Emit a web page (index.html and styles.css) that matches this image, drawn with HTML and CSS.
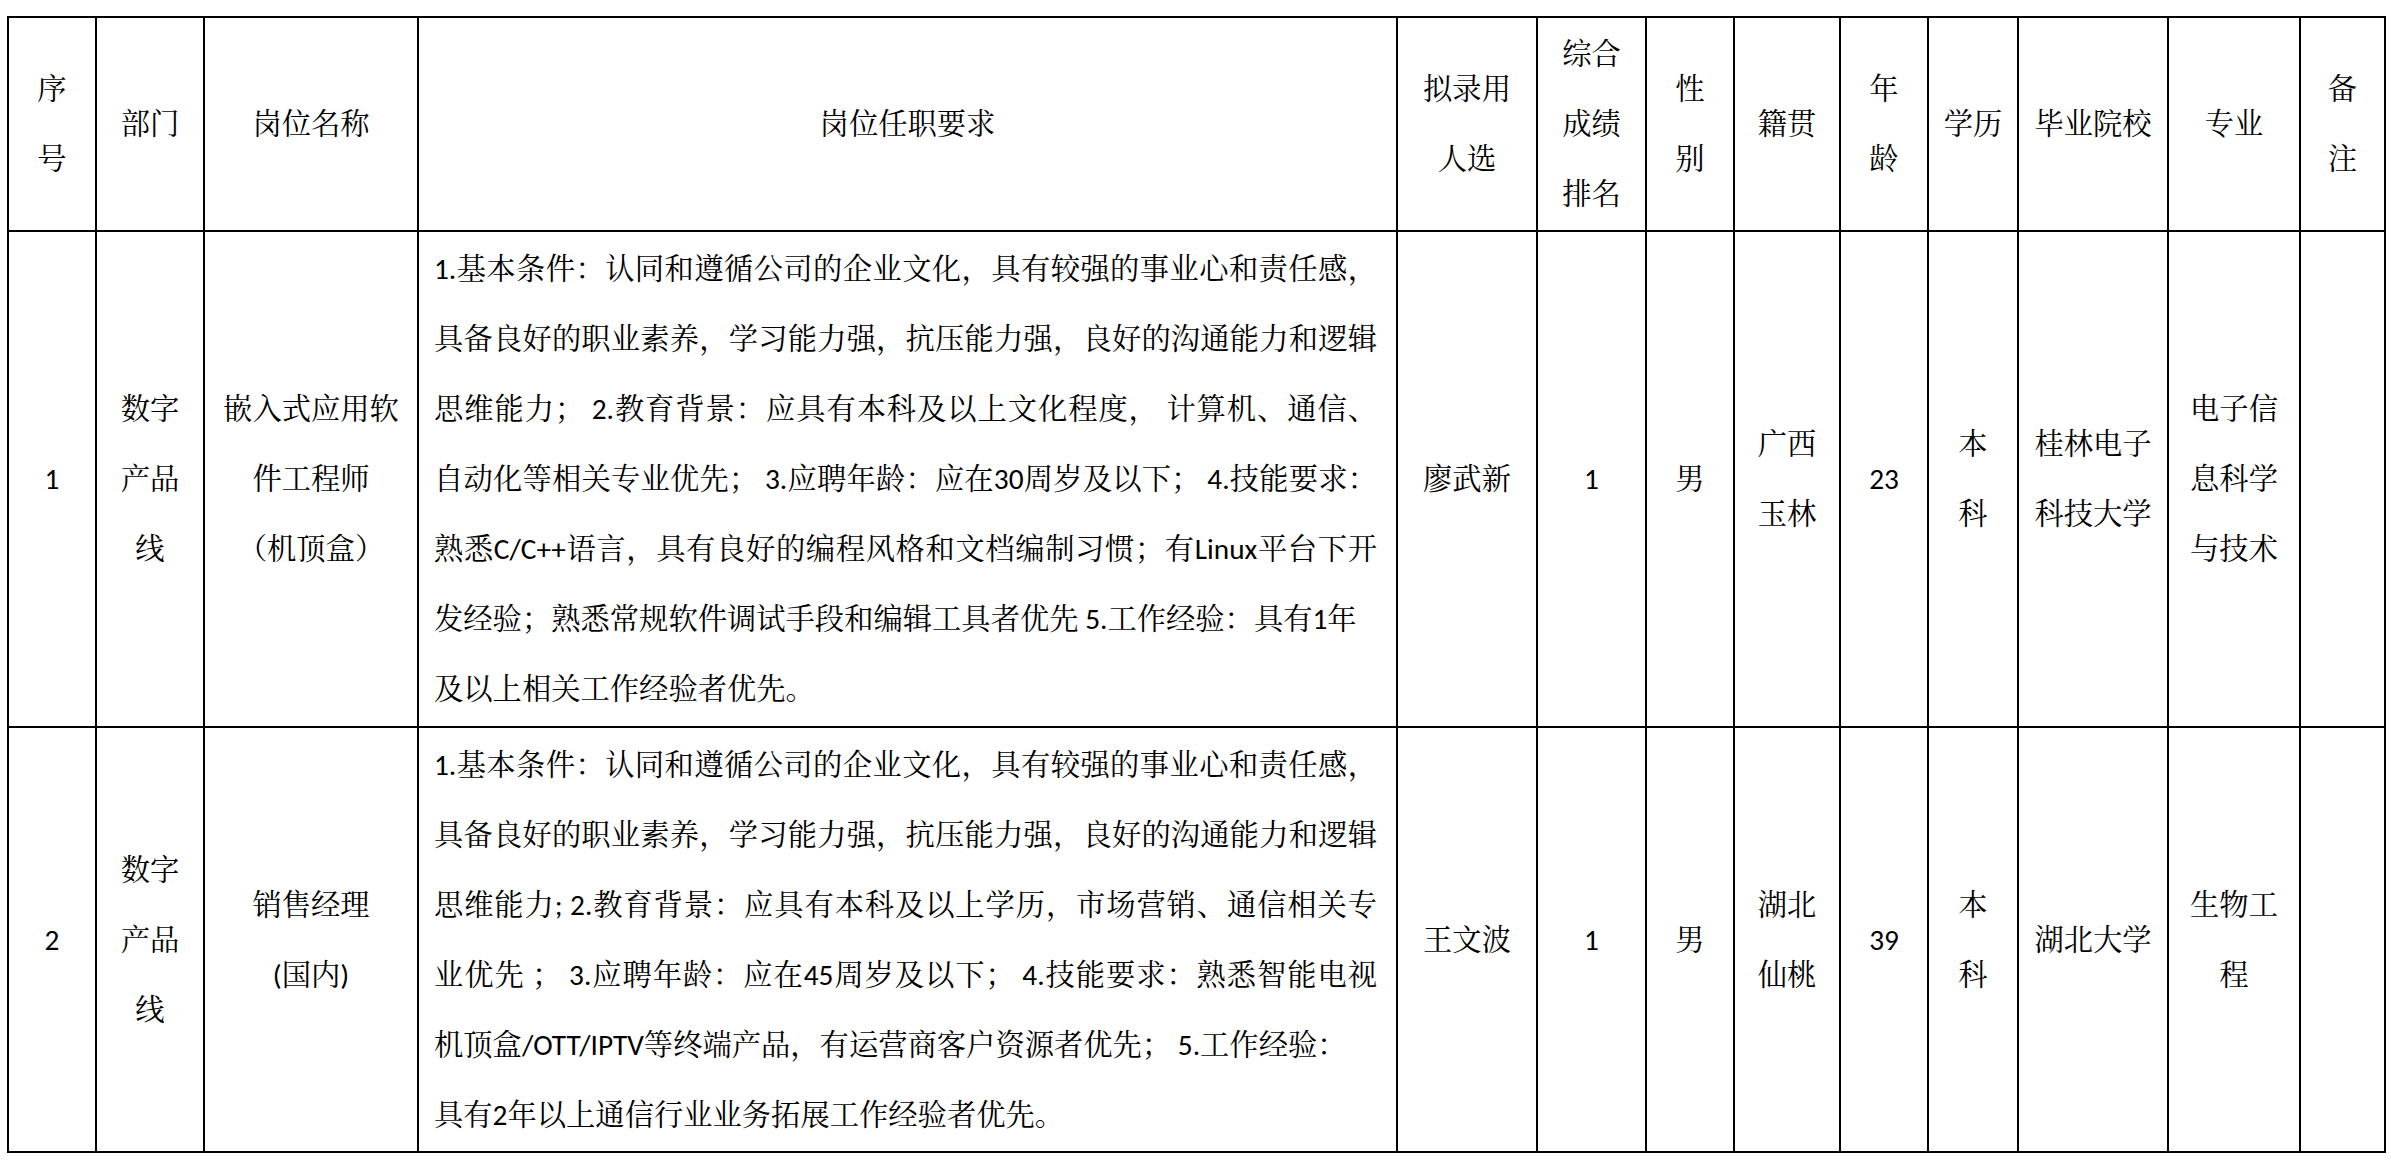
FILE: index.html
```html
<!DOCTYPE html>
<html lang="zh-CN">
<head>
<meta charset="utf-8">
<title>拟录用人员公示</title>
<link rel="stylesheet" href="styles.css">
</head>
<body>
<table class="sheet">
  <colgroup>
    <col class="c-no"><col class="c-dept"><col class="c-job"><col class="c-req">
    <col class="c-name"><col class="c-rank"><col class="c-sex"><col class="c-home">
    <col class="c-age"><col class="c-edu"><col class="c-school"><col class="c-major"><col class="c-note">
  </colgroup>
  <tr class="head">
    <td>序<br>号</td>
    <td>部门</td>
    <td>岗位名称</td>
    <td>岗位任职要求</td>
    <td>拟录用<br>人选</td>
    <td>综合<br>成绩<br>排名</td>
    <td>性<br>别</td>
    <td>籍贯</td>
    <td>年<br>龄</td>
    <td>学历</td>
    <td>毕业院校</td>
    <td>专业</td>
    <td>备<br>注</td>
  </tr>
  <tr class="row1">
    <td>1</td>
    <td>数字<br>产品<br>线</td>
    <td>嵌入式应用软<br>件工程师<br>（机顶盒）</td>
    <td class="req">
      <div class="ln just">1.基本条件：认同和遵循公司的企业文化，具有较强的事业心和责任感，</div>
      <div class="ln just">具备良好的职业素养，学习能力强，抗压能力强，良好的沟通能力和逻辑</div>
      <div class="ln just">思维能力； 2.教育背景：应具有本科及以上文化程度， 计算机、通信、</div>
      <div class="ln just">自动化等相关专业优先； 3.应聘年龄：应在30周岁及以下； 4.技能要求：</div>
      <div class="ln just">熟悉C/C++语言，具有良好的编程风格和文档编制习惯；有Linux平台下开</div>
      <div class="ln">发经验；熟悉常规软件调试手段和编辑工具者优先 5.工作经验：具有1年</div>
      <div class="ln">及以上相关工作经验者优先。</div>
    </td>
    <td>廖武新</td>
    <td>1</td>
    <td>男</td>
    <td>广西<br>玉林</td>
    <td>23</td>
    <td>本<br>科</td>
    <td>桂林电子<br>科技大学</td>
    <td>电子信<br>息科学<br>与技术</td>
    <td></td>
  </tr>
  <tr class="row2">
    <td>2</td>
    <td>数字<br>产品<br>线</td>
    <td>销售经理<br>(国内)</td>
    <td class="req">
      <div class="ln just">1.基本条件：认同和遵循公司的企业文化，具有较强的事业心和责任感，</div>
      <div class="ln just">具备良好的职业素养，学习能力强，抗压能力强，良好的沟通能力和逻辑</div>
      <div class="ln just">思维能力; 2.教育背景：应具有本科及以上学历，市场营销、通信相关专</div>
      <div class="ln just">业优先 ； 3.应聘年龄：应在45周岁及以下； 4.技能要求：熟悉智能电视</div>
      <div class="ln">机顶盒/OTT/IPTV等终端产品，有运营商客户资源者优先； 5.工作经验：</div>
      <div class="ln">具有2年以上通信行业业务拓展工作经验者优先。</div>
    </td>
    <td>王文波</td>
    <td>1</td>
    <td>男</td>
    <td>湖北<br>仙桃</td>
    <td>39</td>
    <td>本<br>科</td>
    <td>湖北大学</td>
    <td>生物工<br>程</td>
    <td></td>
  </tr>
</table>
</body>
</html>
```
FILE: styles.css
```css
html, body {
  margin: 0;
  background: #ffffff;
}
body {
  padding: 16px 0 0 7px;
}
.sheet {
  border-collapse: collapse;
  table-layout: fixed;
  width: 2377px;
  font-family: Carlito, Calibri, "Noto Serif CJK SC", "Noto Sans CJK SC", sans-serif;
  font-size: 29.3px;
  line-height: 70px;
  color: #000000;
}
.sheet td {
  border: 2px solid #000000;
  padding: 0;
  text-align: center;
  vertical-align: middle;
  white-space: nowrap;
  overflow: hidden;
}
.sheet td.req {
  text-align: left;
  padding: 0 19px 0 15px;
}
.ln {
  white-space: nowrap;
}
.ln.just {
  white-space: normal;
  text-align: justify;
  text-align-last: justify;
  text-justify: inter-character;
}
.head { height: 214px; }
.row1 { height: 496px; }
.row2 { height: 425px; }

.c-no { width: 88px; }
.c-dept { width: 108px; }
.c-job { width: 214px; }
.c-req { width: 979px; }
.c-name { width: 140px; }
.c-rank { width: 109px; }
.c-sex { width: 88px; }
.c-home { width: 106px; }
.c-age { width: 88px; }
.c-edu { width: 90px; }
.c-school { width: 150px; }
.c-major { width: 132px; }
.c-note { width: 85px; }
```
